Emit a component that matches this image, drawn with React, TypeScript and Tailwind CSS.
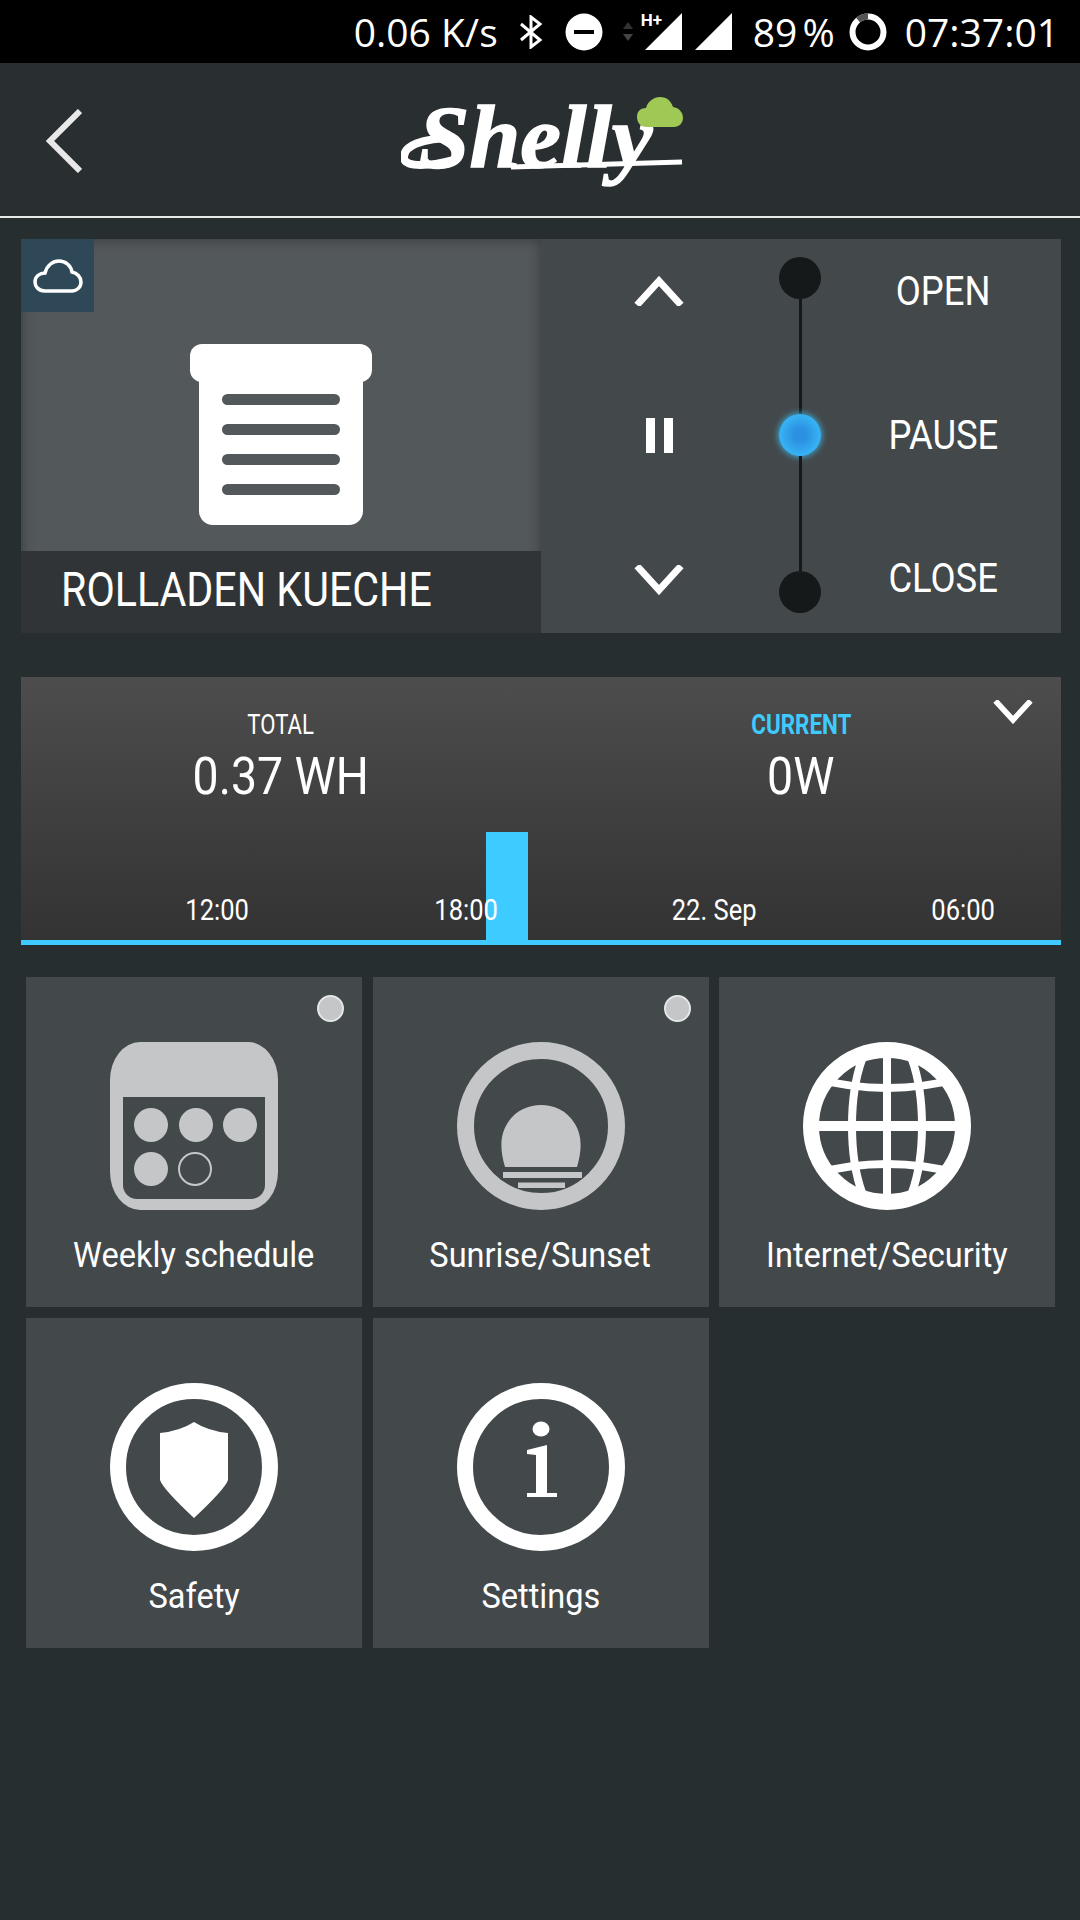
import React from 'react';

const Chevron: React.FC<{ up?: boolean; className?: string }> = ({ up, className }) => (
  <svg viewBox="0 0 50 30" className={className}>
    <path d={up ? 'M3 29 L25 5 L47 29' : 'M3 1 L25 25 L47 1'} fill="none" stroke="#fff" strokeWidth="7" />
  </svg>
);

const CalendarIcon = () => (
  <svg viewBox="0 0 168 168" className="w-[168px] h-[168px]">
    <path fillRule="evenodd" fill="#c4c6c8" d="M30 0 H138 A30 38 0 0 1 168 38 V130 A30 38 0 0 1 138 168 H30 A30 38 0 0 1 0 130 V38 A30 38 0 0 1 30 0 Z M13 55 V143 A14 14 0 0 0 27 157 H141 A14 14 0 0 0 155 143 V55 Z" />
    <circle cx="41" cy="83" r="17" fill="#c4c6c8" />
    <circle cx="86" cy="83" r="17" fill="#c4c6c8" />
    <circle cx="130" cy="83" r="17" fill="#c4c6c8" />
    <circle cx="41" cy="127" r="17" fill="#c4c6c8" />
    <circle cx="85" cy="127" r="16" fill="none" stroke="#c4c6c8" strokeWidth="2" />
  </svg>
);

const SunIcon = () => (
  <svg viewBox="0 0 168 168" className="w-[168px] h-[168px]">
    <circle cx="84" cy="84" r="75.5" fill="none" stroke="#c4c6c8" strokeWidth="17" />
    <path fill="#c4c6c8" d="M48 125 C42 105 44 92 50 82 C58 68 72 63 84 63 C96 63 110 68 118 82 C124 92 126 105 120 125 Z" />
    <rect x="46" y="130" width="79" height="6" fill="#c4c6c8" />
    <rect x="61" y="140.5" width="47" height="5.5" fill="#c4c6c8" />
  </svg>
);

const GlobeIcon = () => (
  <svg viewBox="0 0 168 168" className="w-[168px] h-[168px]">
    <defs>
      <clipPath id="globe-clip">
        <circle cx="84" cy="84" r="80" />
      </clipPath>
    </defs>
    <g fill="none" stroke="#fff" clipPath="url(#globe-clip)">
      <ellipse cx="84" cy="84" rx="35" ry="95" strokeWidth="8" />
      <path d="M84 0 V168" strokeWidth="8" />
      <path d="M0 84 H168" strokeWidth="10" />
      <path d="M10 36 Q84 56 158 36" strokeWidth="8" />
      <path d="M10 132 Q84 112 158 132" strokeWidth="8" />
    </g>
    <circle cx="84" cy="84" r="76" fill="none" stroke="#fff" strokeWidth="16" />
  </svg>
);

const ShieldIcon = () => (
  <svg viewBox="0 0 168 168" className="w-[168px] h-[168px]">
    <circle cx="84" cy="84" r="76" fill="none" stroke="#fff" strokeWidth="16" />
    <path fill="#fff" d="M84 39 Q70 48 50 50 V97 Q53 106 84 135 Q115 106 118 97 V50 Q98 48 84 39 Z" />
  </svg>
);

const InfoIcon = () => (
  <svg viewBox="0 0 168 168" className="w-[168px] h-[168px]">
    <circle cx="84" cy="84" r="76" fill="none" stroke="#fff" strokeWidth="16" />
    <ellipse cx="84" cy="46" rx="8.5" ry="7.5" fill="#fff" />
    <path fill="#fff" d="M70 67 L90 62 V110 H100 V114 H70 V110 H79 V72 L70 71 Z" />
  </svg>
);

const Tile: React.FC<{ label: string; dot?: boolean; children: React.ReactNode }> = ({ label, dot, children }) => (
  <div className="relative h-[330px] bg-[#43484b] flex flex-col items-center pt-[65px]">
    {dot && <div className="absolute top-[18px] right-[18px] w-[27px] h-[27px] rounded-full bg-[#c4c6c8] border-2 border-[#e4e6e8]" />}
    {children}
    <span className="block mt-[25px] text-[35px] leading-[42px] whitespace-nowrap text-white scale-x-[0.93]">{label}</span>
  </div>
);

const AxisLabel: React.FC<{ text: string }> = ({ text }) => (
  <div className="w-[248.5px] shrink-0 flex justify-center">
    <span className="block scale-x-[0.88]">{text}</span>
  </div>
);

const App: React.FC = () => {
  return (
    <div className="w-[1080px] h-[1920px] bg-[#272e30] flex flex-col font-['Roboto',sans-serif] text-white overflow-hidden">
      {/* status bar */}
      <div className="h-[63px] bg-black flex items-center justify-end pr-[21px] font-['Open_Sans',sans-serif] text-[39px] leading-none">
        <span>0.06 K/s</span>
        <svg viewBox="0 0 24 34" className="w-[24px] h-[34px] ml-[21px]">
          <path d="M2 9 L21 25 L12 32 V2 L21 9 L2 25" fill="none" stroke="#fff" strokeWidth="3" />
        </svg>
        <svg viewBox="0 0 38 38" className="w-[38px] h-[38px] ml-[22px]">
          <circle cx="19" cy="19" r="18.5" fill="#fff" />
          <rect x="9" y="17" width="20" height="4" fill="#000" />
        </svg>
        <div className="relative w-[59px] h-[38px] ml-[20px]">
          <svg viewBox="0 0 10 20" className="absolute left-0 top-[9px] w-[10px] h-[20px]">
            <path d="M5 0 L10 7 H0 Z" fill="#333" />
            <path d="M5 19 L10 12 H0 Z" fill="#444" />
          </svg>
          <span className="absolute left-[18px] top-[-1px] text-[17px] font-bold font-['Roboto',sans-serif]">H+</span>
          <svg viewBox="0 0 37 37" className="absolute left-[22px] top-0 w-[37px] h-[37px]">
            <path d="M37 0 V37 H0 Z" fill="#fff" />
          </svg>
        </div>
        <svg viewBox="0 0 37 37" className="w-[37px] h-[37px] ml-[13px]">
          <path d="M37 0 V37 H0 Z" fill="#fff" />
        </svg>
        <span className="ml-[21px] [word-spacing:-5px]">89 %</span>
        <svg viewBox="0 0 38 38" className="w-[38px] h-[38px] ml-[14px]">
          <circle cx="19" cy="19" r="15.5" fill="none" stroke="#fff" strokeWidth="6" />
          <path d="M19 3.5 A15.5 15.5 0 0 0 9 7" fill="none" stroke="#555" strokeWidth="6" />
        </svg>
        <span className="ml-[18px]">07:37:01</span>
      </div>

      {/* app bar */}
      <div className="relative h-[155px] bg-[#292e31] border-b-[2px] border-[#e8eaea] flex items-center justify-center">
        <svg viewBox="0 0 36 64" className="absolute left-[46px] top-[46px] w-[36px] h-[64px]">
          <path d="M34 2 L4 32 L34 62" fill="none" stroke="#e8e8e8" strokeWidth="6" />
        </svg>
        <div className="relative w-[282px] h-[90px] mt-[14px] ml-[4px]">
          <span className="absolute left-[22px] top-[-14px] text-[88px] leading-[100px] font-bold italic font-['Liberation_Serif',serif] scale-x-[1.04] [-webkit-text-stroke:1.5px_white]">Shelly</span>
          <svg viewBox="0 0 282 90" className="absolute left-0 top-0 w-[282px] h-[90px]">
            <path d="M54 36 C20 36 2 44 3 56 C4 66 30 64 52 58" fill="none" stroke="#fff" strokeWidth="8" />
            <path d="M110 65 L281 60" fill="none" stroke="#fff" strokeWidth="5" />
          </svg>
          <svg viewBox="0 0 46 30" className="absolute left-[236px] top-[-5px] w-[46px] h-[30px]">
            <path fill="#a0c855" d="M10 30 C3 30 0 25 0 20 C0 14 4 11 9 11 C11 4 17 0 23 0 C30 0 34 4 36 10 C42 11 46 15 46 21 C46 26 42 30 37 30 Z" />
          </svg>
        </div>
      </div>

      {/* shutter panel */}
      <div className="mt-[21px] ml-[21px] w-[1040px] h-[394px] flex">
        <div className="relative w-[520px] flex flex-col bg-[#53585b] shadow-[inset_0_0_14px_rgba(0,0,0,0.35)]">
          <div className="absolute left-0 top-0 w-[73px] h-[73px] bg-[#2f4858] flex items-center justify-center">
            <svg viewBox="0 0 50 34" className="w-[50px] h-[34px]">
              <path fill="none" stroke="#fff" strokeWidth="3.5" d="M12 32 C5 32 2 27 2 23 C2 17 7 14 12 14 C14 6 20 2 26 2 C33 2 38 7 39 13 C44 14 48 18 48 23 C48 28 44 32 39 32 Z" />
            </svg>
          </div>
          <div className="flex-1 flex items-start justify-center pt-[105px]">
            <div className="relative w-[182px] h-[181px] flex flex-col items-center">
              <div className="w-[182px] h-[38px] rounded-[12px] bg-white" />
              <div className="mt-[-8px] w-[164px] h-[151px] rounded-b-[14px] bg-white flex flex-col items-center gap-[19px] pt-[20px]">
                <div className="w-[118px] h-[11px] rounded-full bg-[#53585b]" />
                <div className="w-[118px] h-[11px] rounded-full bg-[#53585b]" />
                <div className="w-[118px] h-[11px] rounded-full bg-[#53585b]" />
                <div className="w-[118px] h-[11px] rounded-full bg-[#53585b]" />
              </div>
            </div>
          </div>
          <div className="h-[82px] bg-[#303436] flex items-center justify-start pb-[4px]">
            <span className="block ml-[40px] origin-left text-[48px] leading-[60px] whitespace-nowrap scale-x-[0.858]">ROLLADEN KUECHE</span>
          </div>
        </div>
        <div className="w-[520px] bg-[#43484b] flex">
          <div className="w-[236px] flex flex-col items-center justify-between pt-[37px] pb-[38px]">
            <Chevron up className="w-[50px] h-[30px]" />
            <div className="flex gap-[9px] h-[35px]">
              <div className="w-[9px] bg-white" />
              <div className="w-[9px] bg-white" />
            </div>
            <Chevron className="w-[50px] h-[30px]" />
          </div>
          <div className="w-[46px] flex flex-col items-center pt-[18px] pb-[20px]">
            <div className="w-[42px] h-[42px] rounded-full bg-[#16191a]" />
            <div className="flex-1 w-[3px] bg-[#16191a]" />
            <div className="w-[42px] h-[42px] rounded-full bg-[radial-gradient(circle,#2b90e0_20%,#38b4f6_70%,#55d5ff_100%)] shadow-[0_0_7px_#3ec8ff]" />
            <div className="flex-1 w-[3px] bg-[#16191a]" />
            <div className="w-[42px] h-[42px] rounded-full bg-[#16191a]" />
          </div>
          <div className="flex-1 flex flex-col items-center justify-between pt-[33px] pb-[34px] pl-[3px] text-[40px] leading-[40px]">
            <span className="block scale-x-[0.91]">OPEN</span>
            <span className="block scale-x-[0.91]">PAUSE</span>
            <span className="block scale-x-[0.91]">CLOSE</span>
          </div>
        </div>
      </div>

      {/* energy chart */}
      <div className="relative mt-[44px] ml-[21px] w-[1040px] h-[268px] border-b-[5px] border-[#3ecbff] bg-gradient-to-b from-[#4d4d4d] to-[#333333] flex flex-col">
        <Chevron className="absolute right-[28px] top-[23px] w-[40px] h-[24px]" />
        <div className="flex pt-[32px]">
          <div className="w-[520px] flex flex-col items-center">
            <span className="block text-[27px] leading-[32px] scale-x-[0.82]">TOTAL</span>
            <span className="block mt-[6px] text-[52px] leading-[60px] scale-x-[0.893]">0.37 WH</span>
          </div>
          <div className="w-[520px] flex flex-col items-center">
            <span className="block text-[27px] leading-[32px] font-bold text-[#3ecbff] scale-x-[0.83]">CURRENT</span>
            <span className="block mt-[6px] text-[52px] leading-[60px] scale-x-[0.893]">0W</span>
          </div>
        </div>
        <div className="absolute left-[465px] bottom-0 w-[42px] h-[108px] bg-[#3ecbff]" />
        <div className="relative mt-auto pb-[12px] pl-[72px] flex text-[29px] leading-[36px]">
          <AxisLabel text="12:00" />
          <AxisLabel text="18:00" />
          <AxisLabel text="22. Sep" />
          <AxisLabel text="06:00" />
        </div>
      </div>

      {/* function tiles */}
      <div className="mt-[32px] ml-[26px] w-[1029px] grid grid-cols-3 gap-x-[10.5px] gap-y-[11px]">
        <Tile label="Weekly schedule" dot><CalendarIcon /></Tile>
        <Tile label="Sunrise/Sunset" dot><SunIcon /></Tile>
        <Tile label="Internet/Security"><GlobeIcon /></Tile>
        <Tile label="Safety"><ShieldIcon /></Tile>
        <Tile label="Settings"><InfoIcon /></Tile>
      </div>
    </div>
  );
};

export default App;
